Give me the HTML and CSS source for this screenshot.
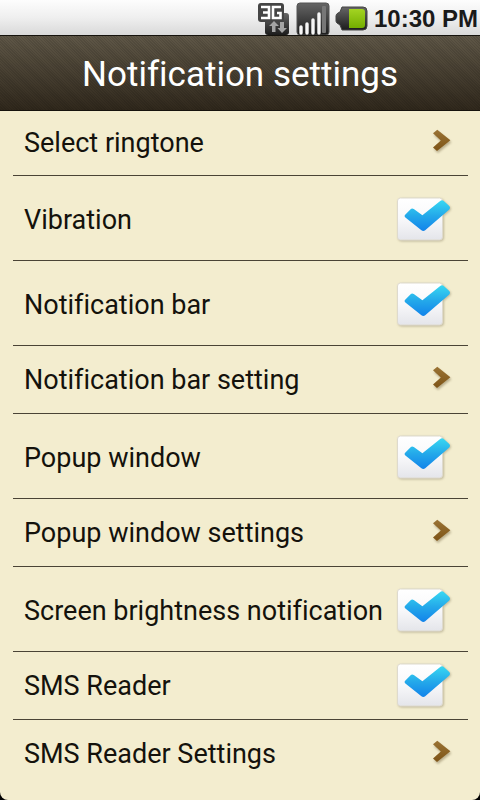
FILE: index.html
```
<!DOCTYPE html>
<html lang="en">
<head>
    <meta charset="UTF-8">
    <meta name="viewport" content="width=device-width, initial-scale=1.0">
    <title>Notification settings</title>
    <link rel="stylesheet" href="styles.css">
</head>
<body>
    <!-- shared icons -->
    <svg class="defs" width="0" height="0" aria-hidden="true">
        <defs>
            <linearGradient id="box-fill" x1="0" y1="0" x2="0" y2="1">
                <stop offset="0" stop-color="#ffffff"/>
                <stop offset="0.5" stop-color="#f8f8fa"/>
                <stop offset="1" stop-color="#e4e5ea"/>
            </linearGradient>
            <linearGradient id="tick-fill" x1="0" y1="0" x2="0" y2="1">
                <stop offset="0" stop-color="#38d8f2"/>
                <stop offset="0.5" stop-color="#24a9ea"/>
                <stop offset="1" stop-color="#1283ea"/>
            </linearGradient>
            <linearGradient id="arrow-fill" x1="0" y1="0" x2="0" y2="1">
                <stop offset="0" stop-color="#9a7334"/>
                <stop offset="1" stop-color="#7d5417"/>
            </linearGradient>
            <linearGradient id="dark-fill" x1="0" y1="0" x2="0" y2="1">
                <stop offset="0" stop-color="#666666"/>
                <stop offset="1" stop-color="#1c1c1c"/>
            </linearGradient>
            <linearGradient id="green-fill" x1="0" y1="0" x2="0" y2="1">
                <stop offset="0" stop-color="#a3d422"/>
                <stop offset="1" stop-color="#74ae00"/>
            </linearGradient>
        </defs>
        <symbol id="tick" viewBox="0 0 58 48">
            <rect x="1.5" y="2" width="45" height="42" rx="3" fill="url(#box-fill)" stroke="#dedace"/>
            <path d="M9.4 18.4L14.6 13.2Q16 11.9 17.8 13L26.4 19.2L44.2 5Q46 3.6 47.8 5L53 9.8Q55 11.8 53 13.8L29.2 34.2Q27.3 35.8 25.4 34.2L9.4 21.4Q7.8 20 9.4 18.4Z" fill="url(#tick-fill)"/>
        </symbol>
        <symbol id="arrow" viewBox="0 0 24 28">
            <path d="M3 6.3L7.3 2.8L20.4 13.2L7 24L3 20.4L10.8 13.4Z" fill="url(#arrow-fill)"/>
        </symbol>
    </svg>

    <div class="status-bar">
        <svg class="status-icon" width="34" height="34" viewBox="0 0 34 34" aria-label="3G">
            <rect x="8" y="12" width="24" height="22" rx="3" fill="url(#dark-fill)"/>
            <rect x="1" y="2" width="26" height="19" rx="3" fill="#454545"/>
            <path d="M4 6H12V17H4M6 11.5H12M24 6H16V17H23.5V12H20" fill="none" stroke="#ffffff" stroke-width="2.6"/>
            <path d="M15 31V25H12L17 20L22 25H18.5V31ZM23 21V27H20.5L25 32L30 27H27V21Z" fill="#a4a4a4"/>
        </svg>
        <svg class="status-icon" width="34" height="34" viewBox="0 0 34 34" aria-label="Signal">
            <rect x="1" y="2" width="32" height="32" rx="3" fill="url(#dark-fill)" stroke="#555555"/>
            <rect x="26" y="5" width="4" height="27" rx="1" fill="#777777"/>
            <path d="M5 32V26M11 32V23M17 32V19M23 32V13" stroke="#f6f6f6" stroke-width="3.4" stroke-linecap="round"/>
        </svg>
        <svg class="status-icon" width="34" height="34" viewBox="0 0 34 34" aria-label="Battery">
            <path d="M7 6H28Q32 6 32 10V25Q32 29 28 29H7L5 24L2 22Q1 21 1 20V15Q1 13 3 12L5 11Z" fill="url(#dark-fill)" stroke="#444444"/>
            <path d="M14 8H27Q30 8 30 11V24Q30 27 27 27H14Z" fill="url(#green-fill)"/>
        </svg>
        <span class="clock">10:30 PM</span>
    </div>

    <div class="screen">
        <header class="title-bar">
            <h1>Notification settings</h1>
        </header>
        <main class="settings">
            <a class="row" href="#ringtone">
                <span class="label">Select ringtone</span>
                <svg class="arrow" aria-hidden="true"><use href="#arrow"/></svg>
            </a>
            <label class="row tall">
                <span class="label">Vibration</span>
                <span class="check">
                    <input type="checkbox" name="vibration" checked>
                    <svg aria-hidden="true"><use href="#tick"/></svg>
                </span>
            </label>
            <label class="row tall">
                <span class="label">Notification bar</span>
                <span class="check">
                    <input type="checkbox" name="notification_bar" checked>
                    <svg aria-hidden="true"><use href="#tick"/></svg>
                </span>
            </label>
            <a class="row" href="#notification-bar">
                <span class="label">Notification bar setting</span>
                <svg class="arrow" aria-hidden="true"><use href="#arrow"/></svg>
            </a>
            <label class="row tall">
                <span class="label">Popup window</span>
                <span class="check">
                    <input type="checkbox" name="popup" checked>
                    <svg aria-hidden="true"><use href="#tick"/></svg>
                </span>
            </label>
            <a class="row" href="#popup">
                <span class="label">Popup window settings</span>
                <svg class="arrow" aria-hidden="true"><use href="#arrow"/></svg>
            </a>
            <label class="row tall">
                <span class="label">Screen brightness notification</span>
                <span class="check">
                    <input type="checkbox" name="brightness" checked>
                    <svg aria-hidden="true"><use href="#tick"/></svg>
                </span>
            </label>
            <label class="row">
                <span class="label">SMS Reader</span>
                <span class="check">
                    <input type="checkbox" name="sms_reader" checked>
                    <svg aria-hidden="true"><use href="#tick"/></svg>
                </span>
            </label>
            <a class="row" href="#sms-reader">
                <span class="label">SMS Reader Settings</span>
                <svg class="arrow" aria-hidden="true"><use href="#arrow"/></svg>
            </a>
        </main>
    </div>
</body>
</html>
```
FILE: styles.css
```
* {
    box-sizing: border-box;
}
body {
    margin: 0;
    min-height: 100vh;
    display: flex;
    flex-direction: column;
    font-family: Roboto, "Liberation Sans", sans-serif;
    font-variant-ligatures: none;
    background-color: #000;
}
.defs {
    position: absolute;
}
.status-bar {
    display: flex;
    justify-content: flex-end;
    align-items: center;
    gap: 5px;
    height: 35px;
    padding-right: 2px;
    background: linear-gradient(#fdfdfd, #efefef 50%, #d9d9d9);
}
.status-icon {
    flex: none;
}
.clock {
    font: bold 24px "Liberation Sans", Arial, sans-serif;
    color: #1a1a1a;
    padding-top: 2px;
}
.screen {
    flex: 1;
    background-color: #f3edcf;
    border-radius: 0 0 8px 8px;
}
.title-bar {
    height: 76px;
    display: flex;
    align-items: center;
    justify-content: center;
    border-top: 1px solid #16130d;
    border-bottom: 1px solid #16130d;
    background:
        repeating-linear-gradient(45deg, rgba(0, 0, 0, 0.1) 0, rgba(0, 0, 0, 0.1) 1px, transparent 1px, transparent 2px),
        linear-gradient(#5f5747, #30281c);
}
.title-bar h1 {
    margin: 0;
    padding-top: 2px;
    font-size: 35px;
    font-weight: 400;
    color: #fff;
}
.settings {
    padding: 0 12px 0 13px;
}
.row {
    display: flex;
    align-items: center;
    justify-content: space-between;
    min-height: 68px;
    padding-left: 11px;
    border-bottom: 1px solid #4a4436;
    color: #14120c;
    font-size: 27px;
    line-height: 32px;
    text-decoration: none;
    cursor: pointer;
}
.row:first-child {
    min-height: 65px;
}
.row:last-child {
    border-bottom: none;
}
.tall {
    min-height: 85px;
    padding-top: 3px;
}
.label {
    white-space: nowrap;
}
.arrow {
    flex: none;
    width: 24px;
    height: 28px;
    margin: 0 14px 4px 0;
    filter: drop-shadow(1px 2px 1px rgba(80, 60, 20, 0.35));
}
.check {
    flex: none;
    display: grid;
    margin-right: 14px;
}
.check input,
.check svg {
    grid-area: 1 / 1;
    width: 58px;
    height: 48px;
    margin: 0;
}
.check input {
    appearance: none;
    cursor: pointer;
}
.check svg {
    pointer-events: none;
    filter: drop-shadow(1px 1px 1px rgba(80, 70, 40, 0.3));
}
```
